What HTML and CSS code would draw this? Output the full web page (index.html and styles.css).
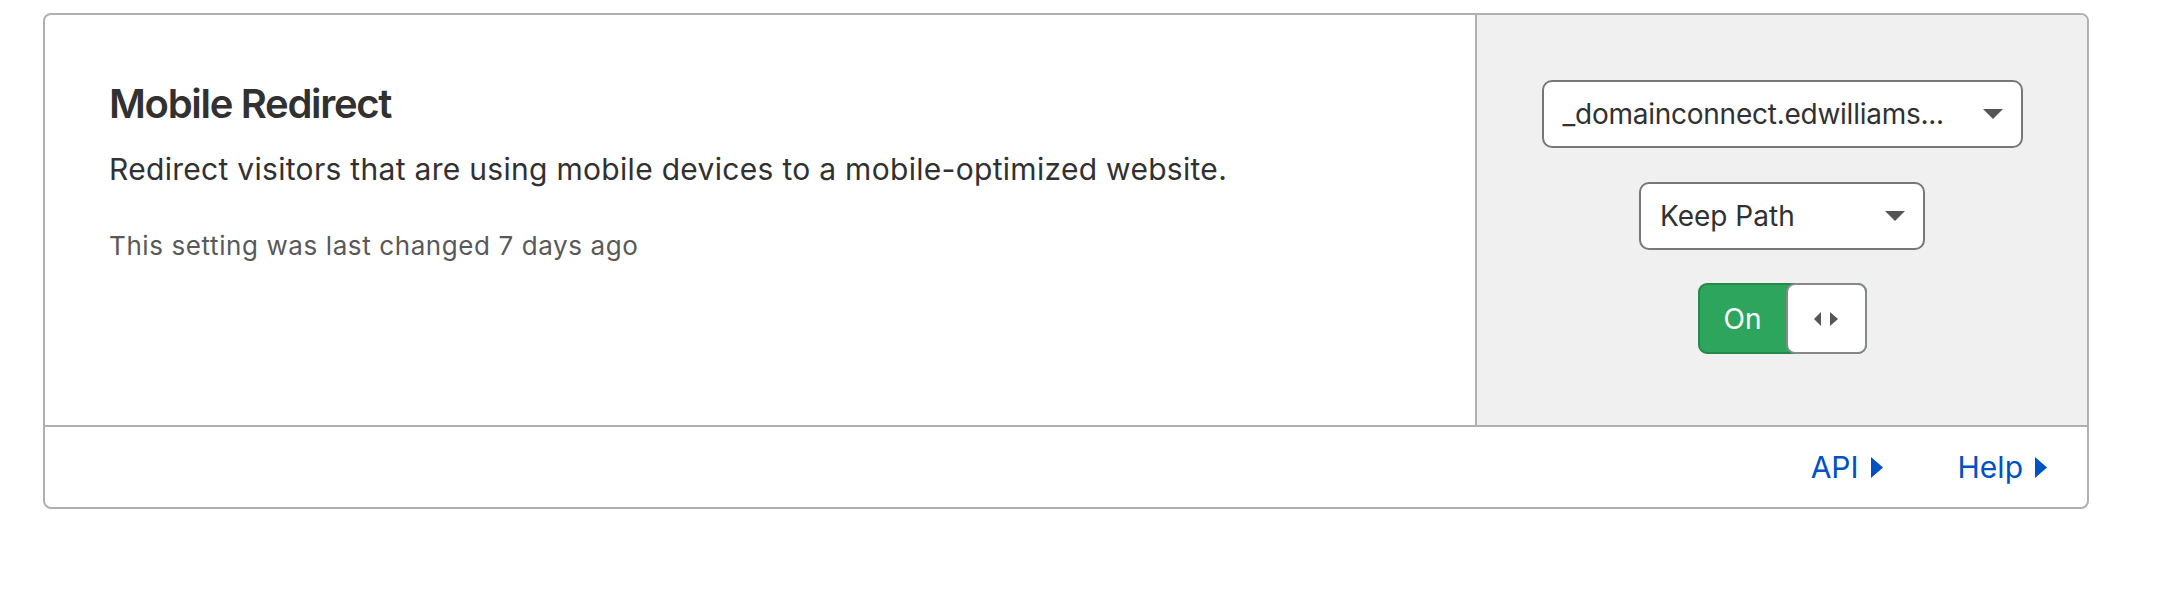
FILE: index.html
```html
<!DOCTYPE html>
<html lang="en">
<head>
<meta charset="utf-8">
<title>Mobile Redirect</title>
<link rel="stylesheet" href="styles.css">
</head>
<body>
<div class="page">
  <section class="card">
    <div class="card-main">
      <div class="card-info">
        <h2 class="card-title">Mobile Redirect</h2>
        <p class="card-desc">Redirect visitors that are using mobile devices to a mobile-optimized website.</p>
        <p class="card-meta">This setting was last changed 7 days ago</p>
      </div>
      <div class="card-controls">
        <div class="select select-wide">
          <span class="select-value">_domainconnect.edwilliams...</span>
          <svg class="caret" width="20" height="10" viewBox="0 0 20 10"><path d="M0 0H20L10 10Z" fill="#555"/></svg>
        </div>
        <div class="select select-narrow">
          <span class="select-value">Keep Path</span>
          <svg class="caret" width="20" height="10" viewBox="0 0 20 10"><path d="M0 0H20L10 10Z" fill="#555"/></svg>
        </div>
        <div class="toggle">
          <span class="toggle-label">On</span>
          <span class="toggle-knob">
            <svg width="24" height="14" viewBox="0 0 24 14"><path d="M7 0V14L0 7Z" fill="#555"/><path d="M16 0V14L24 7Z" fill="#555"/></svg>
          </span>
        </div>
      </div>
    </div>
    <div class="card-footer">
      <a class="footer-link" href="#">API<svg width="12" height="21" viewBox="0 0 12 21"><path d="M0 0L12 10.5L0 21Z" fill="#0051c3"/></svg></a>
      <a class="footer-link" href="#">Help<svg width="12" height="21" viewBox="0 0 12 21"><path d="M0 0L12 10.5L0 21Z" fill="#0051c3"/></svg></a>
    </div>
  </section>
</div>
</body>
</html>
```

FILE: styles.css
```css
* { box-sizing: border-box; }
html, body {
  margin: 0;
  padding: 0;
  background: #ffffff;
}
body {
  font-family: Inter, "Noto Sans", "Liberation Sans", sans-serif;
  color: #313131;
}
.page {
  padding: 13px 0 0 43px;
}
.card {
  width: 2046px;
  border: 2px solid #b0b0b0;
  border-radius: 8px;
  overflow: hidden;
}
.card-main {
  display: grid;
  grid-template-columns: 1430px 1fr;
  border-bottom: 2px solid #b0b0b0;
}
.card-info {
  padding: 65px 40px 0 64px;
}
.card-title {
  margin: 0;
  font-size: 40px;
  line-height: 48px;
  font-weight: 600;
  color: #313131;
  letter-spacing: -1.3px;
}
.card-desc {
  margin: 19px 0 0;
  font-size: 30px;
  line-height: 45px;
  font-weight: 400;
  color: #313131;
  letter-spacing: 0.3px;
}
.card-meta {
  margin: 34px 0 0;
  font-size: 26px;
  line-height: 39px;
  color: #595959;
  letter-spacing: 0.6px;
}
.card-controls {
  border-left: 2px solid #b0b0b0;
  background: #f0f0f0;
  padding: 65px 0 71px;
  display: flex;
  flex-direction: column;
  align-items: center;
}
.select {
  height: 68px;
  background: #fff;
  border: 2px solid #777;
  border-radius: 10px;
  display: flex;
  align-items: center;
  justify-content: space-between;
  padding: 0 18px 0 19px;
  font-size: 28px;
  color: #313131;
}
.select-wide { width: 481px; }
.select-wide .select-value { letter-spacing: -0.25px; }
.select-narrow { width: 286px; margin-top: 34px; }
.select-value { white-space: nowrap; }
.caret { flex: none; }
.toggle {
  margin-top: 33px;
  width: 169px;
  height: 71px;
  background: #2ea55c;
  border: 2px solid #27884c;
  border-radius: 9px;
  display: flex;
}
.toggle-label {
  flex: 1;
  display: flex;
  align-items: center;
  justify-content: center;
  color: #fff;
  font-size: 28px;
}
.toggle-knob {
  width: 81px;
  margin: -2px -2px -2px 0;
  background: #fff;
  border: 2px solid #888;
  border-radius: 9px;
  display: flex;
  align-items: center;
  justify-content: center;
}
.card-footer {
  height: 80px;
  display: flex;
  align-items: center;
  justify-content: flex-end;
  gap: 75px;
  padding-right: 40px;
}
.footer-link {
  display: flex;
  align-items: center;
  gap: 12px;
  font-size: 30px;
  color: #0051c3;
  text-decoration: none;
}
```
